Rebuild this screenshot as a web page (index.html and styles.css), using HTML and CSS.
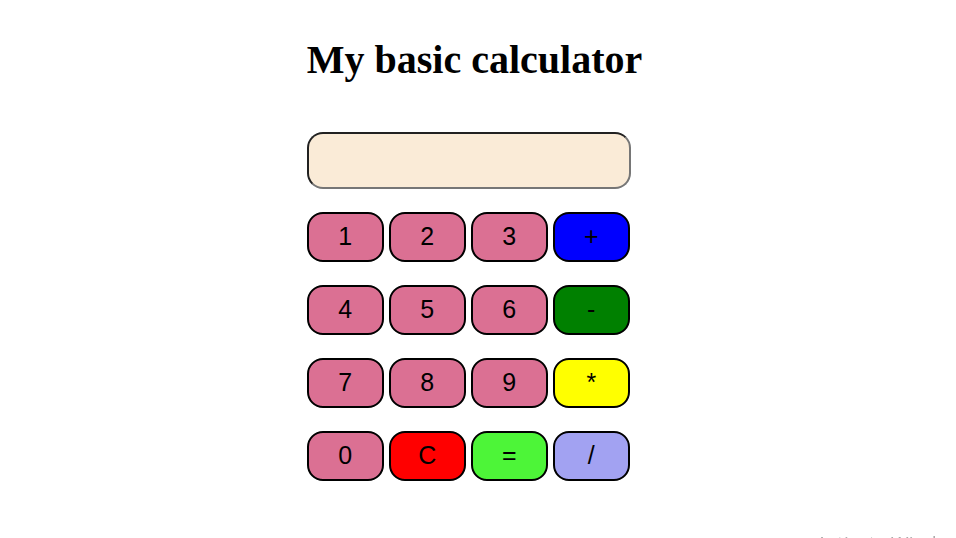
FILE: index.html
```html
<!DOCTYPE html>
<html lang="en">
<head>
  <meta charset="utf-8">
  <title>My basic calculator</title>
  <link rel="stylesheet" href="styles.css">
</head>
<body>
  <main class="calculator">
    <h1 class="title">My basic calculator</h1>
    <input class="display" type="text" aria-label="Result">
    <div class="keys">
      <button class="key">1</button>
      <button class="key">2</button>
      <button class="key">3</button>
      <button class="key add">+</button>
      <button class="key">4</button>
      <button class="key">5</button>
      <button class="key">6</button>
      <button class="key subtract">-</button>
      <button class="key">7</button>
      <button class="key">8</button>
      <button class="key">9</button>
      <button class="key multiply">*</button>
      <button class="key">0</button>
      <button class="key clear">C</button>
      <button class="key equals">=</button>
      <button class="key divide">/</button>
    </div>
  </main>
  <div class="notice"><span>Activate Windows</span></div>
</body>
</html>
```

FILE: styles.css
```css
* {
  box-sizing: border-box;
}

body {
  margin: 0;
  padding: 36px 7px 0 0;
  background: #fff;
  font-family: "Liberation Serif", "Times New Roman", serif;
}

.calculator {
  width: fit-content;
  margin: 0 auto;
}

.title {
  margin: 0 0 48px;
  font-size: 40px;
  line-height: 48px;
  white-space: nowrap;
}

.display {
  display: block;
  width: 324px;
  height: 57px;
  margin: 0 0 23px;
  padding: 0 12px;
  border: 2px solid;
  border-color: #212121 #767676 #767676 #212121;
  border-radius: 16px;
  background: antiquewhite;
  font: 25px "Liberation Sans", Arial, sans-serif;
}

.keys {
  display: grid;
  grid-template-columns: repeat(4, 77px);
  gap: 23px 5px;
}

.key {
  height: 50px;
  padding: 0 0 2px;
  border: 2px solid #000;
  border-radius: 16px;
  background: palevioletred;
  color: #000;
  font: 25px "Liberation Sans", Arial, sans-serif;
}

.add {
  background: blue;
}

.subtract {
  background: green;
}

.multiply {
  background: yellow;
}

.clear {
  background: red;
}

.equals {
  background: #4df538;
}

.divide {
  background: #a2a2f2;
}

/* Runs off the bottom right corner of the window */
.notice {
  position: fixed;
  right: 0;
  bottom: 0;
  width: 140px;
  height: 5px;
  overflow: hidden;
  color: #aaa;
  font: 19px/20px "Open Sans", sans-serif;
  white-space: nowrap;
}
```
